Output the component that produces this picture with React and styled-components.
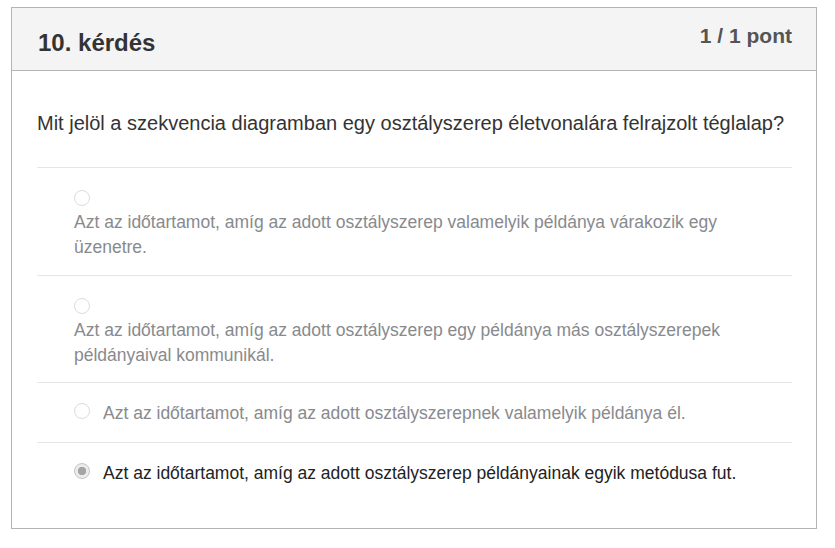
import React from "react";
import styled, { createGlobalStyle } from "styled-components";

const GlobalStyle = createGlobalStyle`
  body {
    margin: 0;
    background: #fff;
    font-family: "Liberation Sans", Arial, sans-serif;
  }
`;

const Page = styled.div`
  padding: 7px 18px 20px 11px;
`;

const Card = styled.div`
  border: 1px solid #b4b4b4;
  width: 806px;
  box-sizing: border-box;
`;

const Header = styled.div`
  background: #f4f4f4;
  border-bottom: 1px solid #b4b4b4;
  height: 63px;
  box-sizing: border-box;
  display: flex;
  justify-content: space-between;
  align-items: flex-start;
  padding: 0 24px 0 26px;
`;

const Title = styled.h2`
  margin: 0;
  padding-top: 21px;
  font-size: 24px;
  font-weight: bold;
  color: #333;
`;

const Score = styled.span`
  padding-top: 16px;
  font-size: 21px;
  font-weight: bold;
  color: #555;
`;

const Body = styled.div`
  padding: 40px 24px 26px 25px;
`;

const Question = styled.p`
  margin: 0 0 31px 0;
  font-size: 20px;
  line-height: 25px;
  color: #333;
`;

const OptionList = styled.div``;

const Option = styled.label`
  display: block;
  border-top: 1px solid #e6e6e6;
  padding: ${({ $wrap }) => ($wrap ? "17px 16px 14.5px 37px" : "17px 16px 16px 37px")};
  font-size: 17.5px;
  line-height: 25px;
  color: ${({ $selected }) => ($selected ? "#222" : "#888a8d")};
`;

const Radio = styled.span`
  display: inline-block;
  vertical-align: middle;
  width: 16px;
  height: 16px;
  box-sizing: border-box;
  border-radius: 50%;
  border: 1px solid ${({ $checked }) => ($checked ? "#c4c4c4" : "#dcdcdc")};
  background: ${({ $checked }) =>
    $checked ? "radial-gradient(circle, #a5a5a8 0 4px, #ececec 4.5px)" : "#fff"};
  margin-right: 13px;
  position: relative;
  top: ${({ $alone }) => ($alone ? "0" : "-2px")};
`;

const Label = styled.span`
  display: inline-block;
  max-width: 100%;
  vertical-align: middle;
`;

const options = [
  {
    text: "Azt az időtartamot, amíg az adott osztályszerep valamelyik példánya várakozik egy üzenetre.",
    wrap: true,
  },
  {
    text: "Azt az időtartamot, amíg az adott osztályszerep egy példánya más osztályszerepek példányaival kommunikál.",
    wrap: true,
  },
  {
    text: "Azt az időtartamot, amíg az adott osztályszerepnek valamelyik példánya él.",
  },
  {
    text: "Azt az időtartamot, amíg az adott osztályszerep példányainak egyik metódusa fut.",
    selected: true,
  },
];

export default function App() {
  return (
    <>
      <GlobalStyle />
      <Page>
        <Card>
          <Header>
            <Title>10. kérdés</Title>
            <Score>1 / 1 pont</Score>
          </Header>
          <Body>
            <Question>
              Mit jelöl a szekvencia diagramban egy osztályszerep életvonalára
              felrajzolt téglalap?
            </Question>
            <OptionList>
              {options.map((o, i) => (
                <Option key={i} $wrap={o.wrap} $selected={o.selected}>
                  <Radio $checked={o.selected} $alone={o.wrap} />
                  <Label>{o.text}</Label>
                </Option>
              ))}
            </OptionList>
          </Body>
        </Card>
      </Page>
    </>
  );
}
